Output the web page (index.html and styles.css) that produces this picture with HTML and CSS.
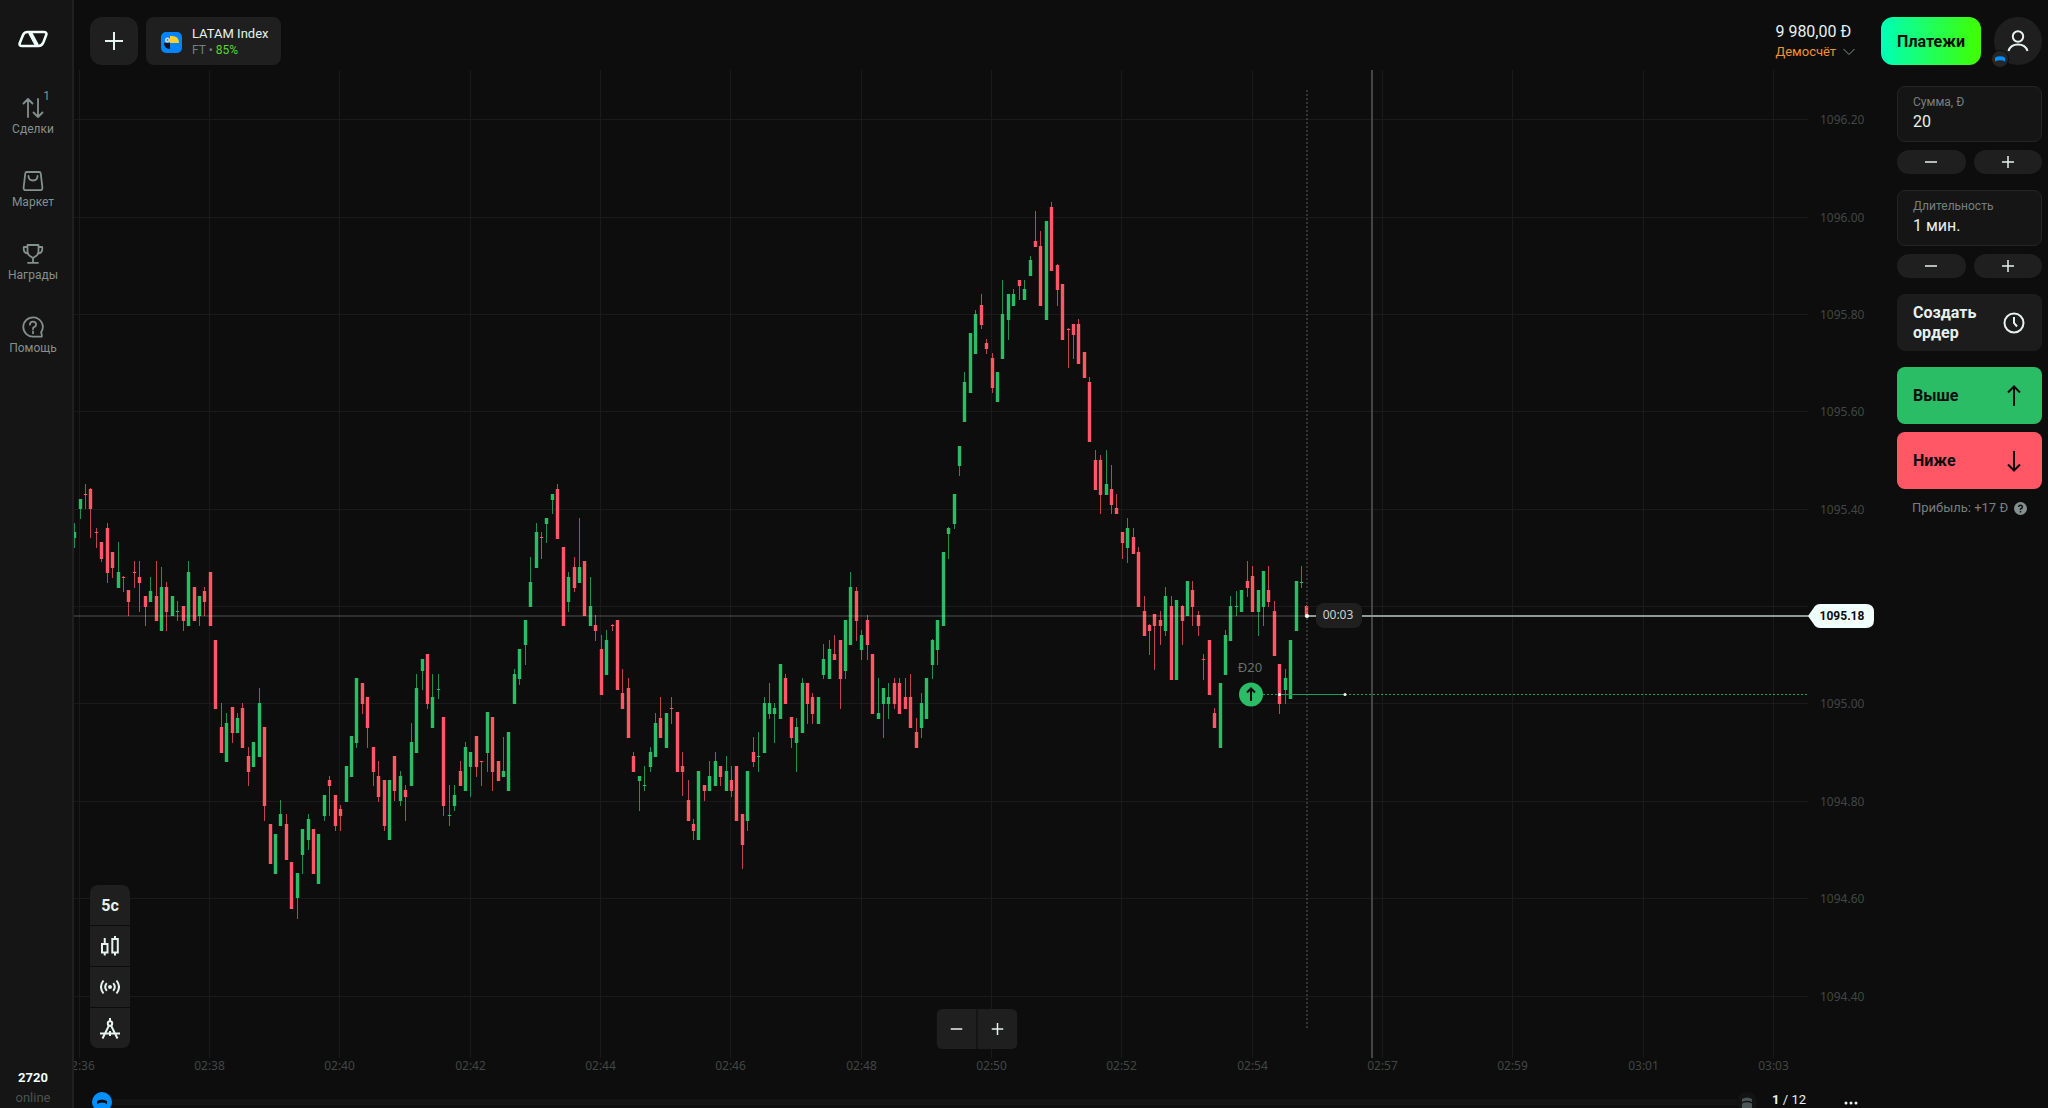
FILE: index.html
```html
<!DOCTYPE html>
<html lang="ru">
<head>
    <meta charset="UTF-8">
    <meta name="viewport" content="width=device-width, initial-scale=1.0">
    <title>LATAM Index</title>
    <link rel="stylesheet" href="styles.css">
</head>
<body>
<div class="app">

    <nav class="sidebar">
        <a class="logo" href="#" aria-label="Главная">
            <svg width="30" height="18" viewBox="0 0 30 18" fill="none" stroke="#f0fffb" stroke-linejoin="round">
                <path stroke-width="2.6" d="M9.6 2H25.6Q29.2 2 28.2 5L25.3 12.6Q23.9 16 20.4 16H4.2Q.8 16 1.8 13L4.9 5.2Q6.2 2 9.6 2z"/>
                <path stroke-width="4" d="M12 2.500L19 15.500"/>
            </svg>
        </a>
        <a class="nav-item" href="#">
            <svg width="22" height="22" viewBox="0 0 22 22"><path d="M6 20V2M1.500 6.500L6 2l4.500 4.500M16 2v18M11.500 15.500L16 20l4.500-4.500"/></svg>
            <span>Сделки</span>
            <sup class="nav-count">1</sup>
        </a>
        <a class="nav-item" href="#">
            <svg width="22" height="22" viewBox="0 0 22 22"><path d="M4.800 2h12.400q1.300 0 1.500 1.300l1.700 14.200q.2 2.700-2.500 2.700H4.100q-2.700 0-2.500-2.700L3.300 3.300Q3.500 2 4.800 2zM6.500 6q0 4.500 4.500 4.500T15.500 6"/></svg>
            <span>Маркет</span>
        </a>
        <a class="nav-item" href="#">
            <svg width="22" height="22" viewBox="0 0 22 22"><path d="M5.500 2h11v6.500q0 3-2.500 4.500l-3 2-3-2q-2.500-1.500-2.500-4.500zM5.500 4H1.800Q1 10.500 6.300 10.500M16.500 4h3.700q.8 6.500-4.500 6.500M11 15v4.500M6 19.800h10"/></svg>
            <span>Награды</span>
        </a>
        <a class="nav-item" href="#">
            <svg width="22" height="22" viewBox="0 0 22 22"><path d="M11 1.300a9.700 9.700 0 1 0 0 19.400h8.700q.6-.8-.6-4.300A9.700 9.700 0 0 0 11 1.300z"/><path d="M7.900 8.700Q8 5.600 11 5.600t3.100 2.900q0 1.600-1.700 2.400T11 13.200M11 15.300v2"/></svg>
            <span>Помощь</span>
        </a>
        <div class="online">
            <b>2720</b>
            <span>online</span>
        </div>
    </nav>

    <main class="main">
        <header class="topbar">
            <button class="add-btn" aria-label="Добавить актив">
                <svg width="18" height="18" viewBox="0 0 18 18"><path d="M9 0v18M0 9h18"/></svg>
            </button>
            <button class="asset">
                <svg width="21" height="21" viewBox="0 0 21 21">
                    <rect width="21" height="21" rx="5" fill="#0084ff"/>
                    <path d="M9 4q9-1 9 7H9z" fill="#ffd02e"/>
                    <path d="M3 11h6v6q-6-.5-6-6z" fill="#111"/>
                    <circle cx="6.500" cy="8" r="2.500" fill="#c9e2f5"/>
                    <circle cx="6.500" cy="8" r="1" fill="#3f7fae"/>
                </svg>
                <span class="asset-text">
                    <span class="asset-name">LATAM Index</span>
                    <span class="asset-info">FT • <em>85%</em></span>
                </span>
            </button>
            <button class="account">
                <span class="balance">9 980,00 Đ</span>
                <span class="account-type">Демосчёт
                    <svg width="12" height="8" viewBox="0 0 12 8"><path d="M.5 1L6 6.500 11.500 1"/></svg>
                </span>
            </button>
            <button class="pay-btn">Платежи</button>
            <button class="profile" aria-label="Профиль">
                <svg width="22" height="22" viewBox="0 0 22 22"><circle cx="11" cy="6.500" r="5.200"/><path d="M1.500 21Q3.500 14.500 11 14.500T20.500 21"/></svg>
                <span class="profile-badge">
                    <svg width="10" height="6" viewBox="0 0 10 6"><path d="M0 1.500Q5-1 10 1.500V5.500Q5 3 0 5.500z"/></svg>
                </span>
            </button>
        </header>

        <div class="workspace">
            <section class="chart">
                <svg class="plot" id="plot" viewBox="74 70 1806 1014" preserveAspectRatio="xMinYMin meet"></svg>

                <div class="tools">
                    <button>5с</button>
                    <button aria-label="Тип графика">
                        <svg width="20" height="20" viewBox="0 0 20 20"><path d="M2 8h5.500v8.500H2zM12.300 3h5.500v13.500h-5.500zM4.750 2v6M4.750 16.500v3M15 0v3M15 16.500v3"/></svg>
                    </button>
                    <button aria-label="Индикаторы">
                        <svg width="20" height="16" viewBox="0 0 20 16"><circle cx="10" cy="8" r="2" fill="#e6f2ee" stroke="none"/><path d="M6.800 4.200Q3.600 8 6.800 11.800M13.200 4.200Q16.400 8 13.200 11.800M3.500 1.500Q-1.500 8 3.500 14.500M16.500 1.500Q21.500 8 16.500 14.500"/></svg>
                    </button>
                    <button aria-label="Рисование">
                        <svg width="20" height="21" viewBox="0 0 20 21"><path d="M10 0v3.500M9 7.500L2.500 20.500M11 7.500l6.500 13M0 15.500h20M10 13v5"/><circle cx="10" cy="5.500" r="2.200"/></svg>
                    </button>
                </div>

                <div class="zoom">
                    <button aria-label="Уменьшить"><svg width="12" height="12" viewBox="0 0 12 12"><path d="M0 6h12"/></svg></button>
                    <button aria-label="Увеличить"><svg width="12" height="12" viewBox="0 0 12 12"><path d="M0 6h12M6 0v12"/></svg></button>
                </div>
            </section>

            <aside class="panel">
                <div class="field">
                    <label for="amount">Сумма, Đ</label>
                    <input id="amount" type="text" value="20">
                </div>
                <div class="stepper">
                    <button aria-label="Меньше"><svg width="12" height="12" viewBox="0 0 12 12"><path d="M0 6h12"/></svg></button>
                    <button aria-label="Больше"><svg width="12" height="12" viewBox="0 0 12 12"><path d="M0 6h12M6 0v12"/></svg></button>
                </div>
                <div class="field">
                    <label for="duration">Длительность</label>
                    <input id="duration" type="text" value="1 мин.">
                </div>
                <div class="stepper">
                    <button aria-label="Короче"><svg width="12" height="12" viewBox="0 0 12 12"><path d="M0 6h12"/></svg></button>
                    <button aria-label="Дольше"><svg width="12" height="12" viewBox="0 0 12 12"><path d="M0 6h12M6 0v12"/></svg></button>
                </div>
                <button class="action order">Создать ордер
                    <svg width="22" height="22" viewBox="0 0 22 22"><circle cx="11" cy="11" r="9.500"/><path d="M11 5v6l3 3.500"/></svg>
                </button>
                <button class="action up">Выше
                    <svg width="22" height="22" viewBox="0 0 22 22"><path d="M11 21V2M5 7.500L11 1.500l6 6"/></svg>
                </button>
                <button class="action down">Ниже
                    <svg width="22" height="22" viewBox="0 0 22 22"><path d="M11 1v19M5 14.500l6 6 6-6"/></svg>
                </button>
                <p class="profit">Прибыль: +17 Đ
                    <svg width="13" height="13" viewBox="0 0 13 13"><circle cx="6.500" cy="6.500" r="6.500" fill="#84908d"/><path d="M4.600 5Q4.700 3.300 6.500 3.300T8.400 4.900Q8.400 6 7.300 6.500T6.500 7.900M6.500 9v1.400" fill="none" stroke="#0d0d0d" stroke-width="1.400"/></svg>
                </p>
            </aside>
        </div>

        <footer class="footer">
            <svg width="20" height="20" viewBox="0 0 20 20"><circle cx="10" cy="10" r="10" fill="#0090ff"/><path d="M5 9q5-3 10 0v3q-5-3-10 0z" fill="#0d0d0d"/></svg>
            <div class="track"></div>
            <svg width="20" height="20" viewBox="0 0 20 20"><circle cx="10" cy="10" r="10" fill="#131313"/><path d="M5 7q5-3 10 0v3q-5-2.500-10 0zM5 11.500q5-2.500 10 0v6H5z" fill="#4b5553"/></svg>
            <span class="pages"><b>1</b> / 12</span>
            <button class="more" aria-label="Ещё"><svg width="14" height="4" viewBox="0 0 14 4"><circle cx="2" cy="2" r="1.500"/><circle cx="7" cy="2" r="1.500"/><circle cx="12" cy="2" r="1.500"/></svg></button>
        </footer>
    </main>
</div>
<script src="chart.js"></script>
</body>
</html>
```

FILE: styles.css
```css
* {
    margin: 0;
    padding: 0;
    box-sizing: border-box;
}

body {
    background-color: #0d0d0d;
    color: #e6f2ee;
    font-family: Roboto, "Noto Sans", sans-serif;
    font-size: 14px;
    overflow: hidden;
}

button, input {
    font: inherit;
    color: inherit;
    background: none;
    border: none;
}

button {
    cursor: pointer;
}

a {
    color: inherit;
    text-decoration: none;
}

svg {
    flex: none;
}

button svg {
    fill: none;
    stroke: currentColor;
    stroke-width: 2;
}

.app {
    display: flex;
    height: 100vh;
}

/* sidebar */
.sidebar {
    width: 74px;
    flex: none;
    padding-right: 6px;
    display: flex;
    flex-direction: column;
    align-items: center;
    background-color: #151515;
    border-right: 2px solid #202020;
}

.logo {
    height: 60px;
    margin-bottom: 37px;
    padding-top: 30px;
}

.nav-item {
    position: relative;
    height: 73px;
    display: flex;
    flex-direction: column;
    align-items: center;
    gap: 2px;
    color: #84908d;
    font-size: 12px;
    line-height: 16px;
}

.nav-item svg {
    fill: none;
    stroke: currentColor;
    stroke-width: 1.800;
    stroke-linecap: round;
    stroke-linejoin: round;
}

.nav-count {
    position: absolute;
    top: -9px;
    right: 4px;
    font-size: 12px;
}

.online {
    margin-top: auto;
    display: flex;
    flex-direction: column;
    align-items: center;
    font-size: 13px;
    line-height: 20px;
    color: #4b5250;
}

.online b {
    color: #f0fffb;
}

/* top bar */
.main {
    flex: 1;
    min-width: 0;
    display: flex;
    flex-direction: column;
}

.topbar {
    height: 70px;
    flex: none;
    display: flex;
    align-items: center;
    gap: 8px;
    padding: 17px 6px 5px 16px;
}

.add-btn, .asset {
    height: 48px;
    display: flex;
    align-items: center;
    justify-content: center;
    background-color: #1f1f1f;
    border-radius: 12px;
}

.add-btn {
    width: 48px;
}

.asset {
    gap: 10px;
    padding: 2px 13px 0 15px;
    border-radius: 8px;
}

.asset svg {
    stroke: none;
}

.asset-text {
    display: flex;
    flex-direction: column;
    text-align: left;
    line-height: 16px;
}

.asset-name {
    font-size: 13px;
}

.asset-info {
    font-size: 12px;
    color: #75807d;
}

.asset-info em {
    font-style: normal;
    color: #5ad633;
}

.account {
    margin-left: auto;
    margin-right: 18px;
    padding-top: 2px;
    display: flex;
    flex-direction: column;
    text-align: left;
    line-height: 20px;
}

.balance {
    font-size: 16px;
}

.account-type {
    display: flex;
    align-items: center;
    gap: 7px;
    font-size: 13px;
    color: #f0932b;
}

.account-type svg {
    stroke: #84908d;
    stroke-width: 1;
}

.pay-btn {
    height: 48px;
    padding: 0 16px;
    border-radius: 12px;
    background: linear-gradient(90deg, #00ffb8, #40ff00);
    color: #0d0d0d;
    font-size: 16px;
    font-weight: 700;
}

.profile {
    position: relative;
    width: 48px;
    height: 48px;
    margin-left: 5px;
    border-radius: 50%;
    background-color: #1f1f1f;
    display: flex;
    align-items: center;
    justify-content: center;
}

.profile-badge {
    position: absolute;
    left: -3px;
    bottom: -3px;
    width: 18px;
    height: 18px;
    border-radius: 50%;
    border: 1px solid #0d0d0d;
    background-color: #262626;
    display: flex;
    align-items: center;
    justify-content: center;
}

.profile-badge svg {
    fill: #0090ff;
    stroke: none;
}

/* chart */
.workspace {
    flex: 1;
    min-height: 0;
    display: flex;
}

.chart {
    position: relative;
    flex: 1;
    min-width: 0;
}

.plot {
    display: block;
    width: 100%;
    height: 100%;
}

.grid-line {
    stroke: #1a1a1a;
    stroke-width: 1;
}

.axis-label {
    font-family: "Noto Sans", sans-serif;
    font-size: 12px;
    fill: #414645;
}

.time-label {
    text-anchor: middle;
}

.candle-up {
    fill: #2abd66;
}

.candle-down {
    fill: #ff5765;
}

.wick {
    opacity: 0.750;
}

.price-past {
    stroke: #fff;
    stroke-opacity: 0.140;
    stroke-width: 2;
}

.price-now {
    stroke: #8f9997;
    stroke-width: 2;
}

.deadline {
    stroke: #5a5f5e;
    stroke-width: 1;
    stroke-dasharray: 2 2;
}

.expiry {
    stroke: #414544;
    stroke-width: 2;
}

.deal-line {
    stroke: #1f9c55;
    stroke-width: 1;
}

.dashed {
    stroke-dasharray: 2 2;
}

.dot {
    fill: #f0fffb;
}

.timer-box {
    fill: #1f1f1f;
}

.timer-text {
    font-family: "Noto Sans", sans-serif;
    font-size: 12px;
    fill: #c9d3d0;
    text-anchor: middle;
}

.deal-text {
    font-family: "Noto Sans", sans-serif;
    font-size: 13px;
    fill: #68706e;
    text-anchor: middle;
}

.deal-arrow {
    fill: none;
    stroke: #0d0d0d;
    stroke-width: 2;
}

.price-tag {
    fill: #f0fffb;
}

.price-text {
    font-size: 12px;
    font-weight: 700;
    fill: #0d0d0d;
    text-anchor: middle;
}

.tools {
    position: absolute;
    left: 16px;
    bottom: 36px;
    display: flex;
    flex-direction: column;
    gap: 1px;
    border-radius: 8px;
    overflow: hidden;
}

.tools button, .zoom button {
    width: 40px;
    height: 40px;
    display: flex;
    align-items: center;
    justify-content: center;
    background-color: #1f1f1f;
    font-size: 16px;
    font-weight: 700;
}

.zoom {
    position: absolute;
    left: 50%;
    bottom: 35px;
    transform: translateX(-50%);
    display: flex;
    gap: 1px;
    border-radius: 6px;
    overflow: hidden;
}

.zoom svg, .stepper svg {
    stroke-width: 1.500;
}

/* trade panel */
.panel {
    width: 168px;
    flex: none;
    padding: 16px 6px 0 17px;
    display: flex;
    flex-direction: column;
}

.field {
    height: 56px;
    padding: 6px 15px;
    display: flex;
    flex-direction: column;
    background-color: #151515;
    border: 1px solid #242424;
    border-radius: 8px;
}

.field label {
    font-size: 12px;
    line-height: 18px;
    color: #75807d;
}

.field input {
    width: 100%;
    font-size: 16px;
    line-height: 22px;
}

.stepper {
    display: flex;
    gap: 8px;
    margin: 8px 0 16px;
}

.stepper button {
    flex: 1;
    height: 24px;
    display: flex;
    align-items: center;
    justify-content: center;
    background-color: #1f1f1f;
    border-radius: 12px;
}

.action {
    height: 57px;
    padding: 0 17px 0 16px;
    display: flex;
    align-items: center;
    justify-content: space-between;
    border-radius: 8px;
    font-size: 16px;
    font-weight: 700;
    line-height: 20px;
    text-align: left;
}

.order {
    margin-bottom: 16px;
    background-color: #1c1c1c;
}

.up, .down {
    color: #0d0d0d;
}

.up {
    margin-bottom: 8px;
    background-color: #2abd66;
}

.down {
    background-color: #ff5765;
}

.profit {
    display: flex;
    align-items: center;
    justify-content: center;
    gap: 6px;
    margin-top: 9px;
    line-height: 20px;
    font-size: 13px;
    color: #75807d;
}

/* footer */
.footer {
    height: 24px;
    flex: none;
    padding: 8px 22px 0 18px;
    display: flex;
    align-items: flex-start;
}

.track {
    flex: 1;
    height: 6px;
    margin-top: 7px;
    background-color: #131313;
}

.pages {
    margin: 0 38px 0 15px;
    font-size: 13px;
    line-height: 16px;
}

.more {
    line-height: 16px;
    margin-right: 168px;
}

.more svg {
    fill: #e6f2ee;
    stroke: none;
}
```

FILE: chart.js
```js
const plot = document.getElementById('plot');

// one entry per 5s candle: direction, high, body top, body bottom, low
const candles = `
g523,532,538,548 g499,499,509,519 r484,494,495,509 r488,489,509,538 r528,532,533,548 r542,542,559,562
r523,528,573,583 r552,552,568,578 g542,572,588,588 r576,577,578,592 r590,590,602,616 r561,572,573,588
r561,577,583,612 r596,596,607,626 g577,591,602,602 r561,596,621,621 g567,587,631,631 r582,587,612,631
g596,596,616,616 g601,611,612,621 r606,606,621,631 g561,572,626,626 r587,587,621,621 g596,596,616,626
r587,591,602,616 r572,572,626,626 r640,640,709,709 r703,727,753,753 g713,723,762,762 r707,707,733,743
g713,718,733,733 r703,708,748,748 r747,756,772,786 g742,742,767,767 g688,703,757,757 r727,727,806,821
r824,824,864,864 g834,834,874,874 g800,814,826,826 r814,824,860,860 r862,862,909,909 g873,873,898,919
g829,829,855,874 g814,819,840,850 r829,829,874,874 g834,834,884,884 g795,795,816,821 r776,780,786,816
r795,795,826,831 r805,809,816,831 g766,766,802,802 g736,736,777,777 g678,678,743,748 r683,683,704,714
r697,697,728,748 r747,747,772,786 r761,776,797,802 r780,780,826,831 g780,780,840,840 r756,756,791,801
g771,776,801,806 r785,790,797,821 g723,742,786,786 g674,688,753,753 g659,659,671,690 r654,654,704,709
g674,697,728,728 g674,689,690,699 r717,717,806,816 g785,815,816,826 g785,795,806,811 r761,771,786,786
g742,747,791,791 g752,752,767,797 r736,736,767,777 r761,761,762,786 g712,712,753,772 r717,717,772,791
r761,761,781,781 g737,771,777,777 g732,732,791,791 g669,674,704,704 g649,649,679,685 g620,620,645,665
g557,582,607,607 g523,532,568,568 r532,537,538,559 g518,518,524,543 g494,494,500,514 r484,489,539,539
r547,547,626,626 g572,577,602,612 r557,567,588,592 g518,567,583,583 r561,561,616,616 g577,606,626,626
r615,625,631,641 r635,649,695,695 g630,640,675,675 r624,625,626,631 r620,620,690,690 r669,693,709,709
r678,688,738,738 r752,756,772,772 g776,776,781,811 g766,785,786,791 g747,752,767,772 g713,723,757,757
r697,718,738,738 g713,713,748,748 r697,708,709,724 r712,712,772,772 r752,766,772,796 r780,800,821,821
r819,824,831,840 g771,771,840,840 r785,785,791,801 g761,776,791,791 g752,761,786,786 r766,766,777,786
g756,771,791,791 r766,780,791,797 r766,766,821,821 r814,814,845,869 g771,771,821,831 r737,752,762,767
g732,756,757,772 g697,703,753,753 g683,703,714,719 g703,708,714,743 g664,664,719,719 r674,678,704,704
r717,717,738,748 g718,727,743,772 g678,683,733,733 r683,683,704,724 r693,697,714,724 g697,697,724,724
g644,659,675,679 g640,649,679,679 r635,654,660,660 r640,640,679,709 g620,620,671,679 g572,587,645,645
r587,591,621,641 g630,635,650,660 r615,620,645,660 r654,654,714,714 g678,713,719,719 g688,688,704,738
g683,697,704,719 r678,683,704,709 r678,683,714,714 r678,697,709,709 r674,697,728,728 r718,732,748,748
g693,703,728,738 g678,678,719,719 g639,640,665,679 g620,620,650,665 g552,552,626,626 g527,528,534,559
g494,494,524,529 g446,446,466,476 g372,382,422,422 g333,333,393,393 g310,314,354,354 r294,305,325,329
r339,343,349,354 r353,358,388,393 g372,372,402,402 g280,314,359,359 g294,294,320,340 g289,294,306,306
r280,280,286,300 g280,289,300,300 g256,260,276,276 r211,241,247,247 r231,246,306,306 g221,221,320,320
r202,207,271,271 r264,265,290,306 r284,284,340,340 r328,329,330,368 r324,324,335,359 r319,324,364,364
r352,352,378,378 r377,382,442,442 r450,460,490,490 r455,460,495,514 g450,484,495,495 r465,489,505,514
r494,508,514,514 r532,532,543,559 g518,528,548,563 r528,537,554,554 r547,552,607,607 r596,611,636,636
r624,625,631,655 r614,614,626,670 r611,620,626,645 g587,596,631,636 r596,606,680,680 g600,600,680,680
r605,606,621,645 g581,581,616,616 r581,590,607,626 r611,615,626,636 r654,659,660,680 r640,640,695,695
r708,713,728,728 g683,683,748,748 g630,635,675,675 g596,606,641,641 g591,606,607,616 g590,590,612,612
r561,581,588,597 r566,576,612,612 g590,590,612,636 g571,571,607,626 r566,590,602,607 r601,611,656,656
r664,664,704,714 g669,678,690,704 g640,640,699,699 g581,581,631,631 g566,582,583,588 r605,606,617,617
`.trim().split(/\s+/);

const times = ['02:36', '02:38', '02:40', '02:42', '02:44', '02:46', '02:48',
    '02:50', '02:52', '02:54', '02:57', '02:59', '03:01', '03:03'];

function add(tag, cls, attrs, text) {
    const el = document.createElementNS('http://www.w3.org/2000/svg', tag);
    el.setAttribute('class', cls);
    for (const key in attrs) el.setAttribute(key, attrs[key]);
    if (text) el.textContent = text;
    plot.appendChild(el);
}

function line(cls, x1, y1, x2, y2) {
    add('line', cls, { x1, y1, x2, y2 });
}

// grid and axes
for (let i = 0; i < 10; i++) {
    const y = Math.floor(119.95 + i * 97.34) + 0.5;
    line('grid-line', 74, y, 1808, y);
    if (i !== 5) {
        add('text', 'axis-label', { x: 1820, y: y + 4 }, (1096.2 - i * 0.2).toFixed(2));
    }
}
times.forEach((t, i) => {
    const x = Math.floor(79 + i * 130.35) + 0.5;
    line('grid-line', x, 70, x, 1058);
    add('text', 'axis-label time-label', { x: x, y: 1070 }, t);
});

// candles
candles.forEach((c, i) => {
    const x = Math.floor(74.6 + i * 5.429) + 0.5;
    const cls = c[0] === 'g' ? 'candle-up' : 'candle-down';
    const [high, top, bottom, low] = c.slice(1).split(',').map(Number);
    add('rect', cls + ' wick', { x: x - 0.5, y: high, width: 1, height: low - high });
    add('rect', cls, { x: x - 1.7, y: top, width: 3.4, height: bottom - top });
});

// current price
line('price-past', 74, 616, 1307, 616);
line('deadline', 1307, 90, 1307, 1030);
line('expiry', 1372, 70, 1372, 1058);
line('price-now', 1307, 616, 1812, 616);
add('circle', 'dot', { cx: 1307, cy: 616, r: 2 });
add('rect', 'timer-box', { x: 1316, y: 603, width: 46, height: 25, rx: 8 });
add('text', 'timer-text', { x: 1338, y: 619 }, '00:03');
add('path', 'price-tag', { d: 'M1808 616L1815 606Q1817 604 1820 604H1866Q1874 604 1874 612V620Q1874 628 1866 628H1820Q1817 628 1815 626Z' });
add('text', 'price-text', { x: 1842, y: 620 }, '1095.18');

// open deal
line('deal-line dashed', 1263, 694.5, 1279, 694.5);
line('deal-line', 1279, 694.5, 1345, 694.5);
line('deal-line dashed', 1345, 694.5, 1808, 694.5);
add('circle', 'dot', { cx: 1279.5, cy: 694.5, r: 1.5 });
add('circle', 'dot', { cx: 1345, cy: 694.5, r: 1.5 });
add('circle', 'candle-up', { cx: 1251, cy: 694.5, r: 12 });
add('path', 'deal-arrow', { d: 'M1251 701V689M1247 692.5L1251 688.5L1255 692.5' });
add('text', 'deal-text', { x: 1250, y: 672 }, 'Đ20');
```
